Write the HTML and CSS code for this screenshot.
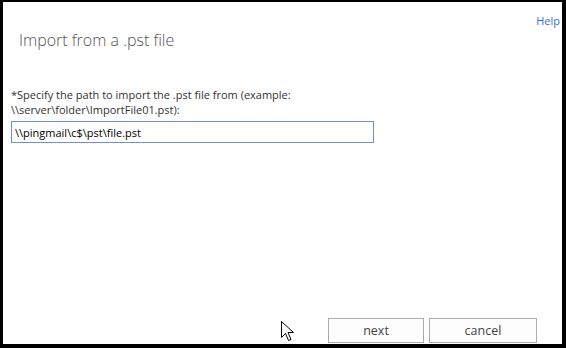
FILE: index.html
```html
<!DOCTYPE html>
<html lang="en">
<head>
    <meta charset="UTF-8">
    <title>Import from a .pst file</title>
    <link rel="stylesheet" href="styles.css">
</head>
<body>
    <div class="dialog">
        <header class="dialog-header">
            <h1>Import from a .pst file</h1>
            <a class="help" href="#">Help</a>
        </header>

        <div class="dialog-body">
            <label class="field-label" for="pst-path">*Specify the path to import the .pst file from (example: \\server\folder\ImportFile01.pst):</label>
            <input class="field-input" id="pst-path" type="text" value="\\pingmail\c$\pst\file.pst">
        </div>

        <div class="dialog-footer">
            <button class="btn">next</button>
            <button class="btn btn-cancel">cancel</button>
        </div>

        <!-- mouse pointer from the screenshot -->
        <svg class="pointer" width="13" height="21" viewBox="0 0 13 21">
            <path d="M0.5 0.5 L0.5 16.5 L4.5 12.5 L7.5 19.5 L10 18.5 L7 11.5 L12.5 11.5 Z" fill="#fff" stroke="#000" stroke-width="1" stroke-linejoin="miter"/>
        </svg>
    </div>
</body>
</html>
```

FILE: styles.css
```css
* {
    margin: 0;
    padding: 0;
    box-sizing: border-box;
}

body {
    font-family: 'Open Sans', 'Liberation Sans', sans-serif;
    background-color: #ffffff;
    color: #333333;
}

.dialog {
    position: relative;
    width: 566px;
    height: 348px;
    border-style: solid;
    border-color: #000000;
    border-width: 2px 4px 4px 3px;
    background-color: #ffffff;
    display: flex;
    flex-direction: column;
}

.dialog-header {
    display: flex;
    justify-content: space-between;
    align-items: flex-start;
    padding: 11px 2px 0 16px;
}

h1 {
    font-weight: 300;
    font-size: 16px;
    color: #555555;
    margin-top: 16px;
}

.help {
    font-size: 11px;
    color: #3a6fd4;
    text-decoration: none;
}

.dialog-body {
    padding: 36px 0 0 8px;
    display: flex;
    flex-direction: column;
}

.field-label {
    font-size: 11px;
    line-height: 15px;
    width: 310px;
    color: #333333;
}

.field-input {
    margin-top: 4px;
    width: 363px;
    height: 22px;
    border: 1px solid #6d8fd6;
    font-family: inherit;
    font-size: 11px;
    color: #000000;
    padding: 0 3px;
    outline: none;
}

.dialog-footer {
    margin-top: auto;
    display: flex;
    justify-content: flex-end;
    gap: 5px;
    padding: 0 25px 1px 0;
}

.btn {
    width: 96px;
    height: 25px;
    border: 1px solid #acacac;
    background-color: #fdfdfd;
    font-family: inherit;
    font-size: 12.5px;
    color: #444444;
}

.btn-cancel {
    width: 108px;
}

.pointer {
    position: absolute;
    left: 278px;
    top: 319px;
}
```
